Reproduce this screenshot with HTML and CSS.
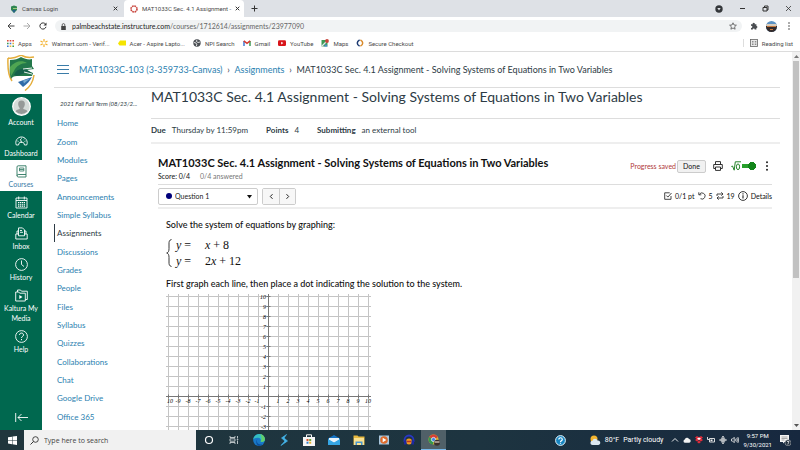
FILE: index.html
```html
<!DOCTYPE html>
<html lang="en">
<head>
<meta charset="utf-8">
<title>MAT1033C Sec. 4.1 Assignment</title>
<link rel="stylesheet" href="styles.css">
</head>
<body>
<header class="browser">
  <div class="tabs">
    <div class="tab">
      <svg class="i8" viewBox="0 0 8 8"><path d="M1 1.500 4 .5l3 1V5L4 8 1 5z" fill="#2f8550"/><path d="M2 5h4L4 8z" fill="#27618a"/><path d="M3 3.500h4" stroke="#9dc87a"/></svg>
      <span class="tab-name">Canvas Login</span>
      <button class="close" aria-label="Close tab"><svg class="i5" viewBox="0 0 5 5"><path d="m.7.7 3.600 3.600m0-3.600L.7 4.300" stroke="#333" fill="none"/></svg></button>
    </div>
    <div class="tab tab-on">
      <svg class="i8" viewBox="0 0 8 8"><circle cx="4" cy="4" r="3" fill="none" stroke="#c8423a" stroke-width="1.600" stroke-dasharray="1.700 .65"/></svg>
      <span class="tab-name">MAT1033C Sec. 4.1 Assignment -</span>
      <button class="close" aria-label="Close tab"><svg class="i5" viewBox="0 0 5 5"><path d="m.7.7 3.600 3.600m0-3.600L.7 4.300" stroke="#333" fill="none"/></svg></button>
    </div>
    <button class="newtab" aria-label="New tab"><svg class="i7" viewBox="0 0 7 7"><path d="M3.500.5v6m-3-3h6" stroke="#333"/></svg></button>
    <div class="window">
      <svg class="i8" viewBox="0 0 8 8"><circle cx="4" cy="4" r="3.700" fill="#33363a"/><path d="M2.300 3h3.400L4 5.500z" fill="#dee1e6"/></svg>
      <button aria-label="Minimize"><svg class="i7" viewBox="0 0 7 7"><path d="M1 3.500h5" stroke="#333"/></svg></button>
      <button aria-label="Restore"><svg class="i7" viewBox="0 0 7 7"><path d="M1 2.500h4V6H1zM2.500 2.500V1H6v4H5" fill="none" stroke="#333"/></svg></button>
      <button aria-label="Close"><svg class="i7" viewBox="0 0 7 7"><path d="m1 1 5 5m0-5L1 6" stroke="#333" stroke-width=".8"/></svg></button>
    </div>
  </div>
  <div class="toolbar">
    <button aria-label="Back"><svg class="i8" viewBox="0 0 8 8"><path d="M7.500 4H1m3-3L1 4l3 3" fill="none" stroke="#444"/></svg></button>
    <button aria-label="Forward"><svg class="i8" viewBox="0 0 8 8"><path d="M.5 4H7M4 1l3 3-3 3" fill="none" stroke="#aaa"/></svg></button>
    <button aria-label="Reload"><svg class="i8" viewBox="0 0 8 8"><path d="M6.600 2.300A3.100 3.100 0 1 0 7 4.800" fill="none" stroke="#333"/><path d="M7.500.5v3h-3z" fill="#333"/></svg></button>
    <div class="address">
      <svg class="i7" viewBox="0 0 7 7"><path d="M1.200 3h4.600v4H1.200z" fill="#444"/><path d="M2.200 3V1.900a1.300 1.300 0 0 1 2.600 0V3" fill="none" stroke="#444" stroke-width=".8"/></svg>
      <a class="url" href="#"><b>palmbeachstate.instructure.com</b>/courses/1712614/assignments/23977090</a>
      <svg class="i8" viewBox="0 0 8 8"><path d="m4 .8 1 2.200 2.400.2-1.800 1.600.5 2.400L4 6 1.900 7.200l.5-2.400L.6 3.200 3 3z" fill="none" stroke="#555" stroke-width=".8"/></svg>
    </div>
    <svg class="i8" viewBox="0 0 8 8"><path d="M1 2.200h1.700a1.100 1.100 0 1 1 2 0h1.700v1.700a1 1 0 1 1 0 2v1.700H4.600a.9.9 0 1 0-1.700 0H1V5.800a1 1 0 1 0 0-1.900z" fill="#4a4d51"/></svg>
    <svg class="i11" viewBox="0 0 11 11"><clipPath id="pc"><circle cx="5.500" cy="5.500" r="5.500"/></clipPath><g clip-path="url(#pc)"><path fill="#5d93c4" d="M0 0h11v11H0z"/><path fill="#d8cdbd" d="M0 3h11v2H0z"/><path fill="#332b2b" d="M0 5h11v6H0z"/><path fill="#c77a40" d="M1 5h9v1H1zm3 3h3v1H4z"/></g></svg>
    <button aria-label="Menu"><svg class="i8" viewBox="0 0 8 8"><g fill="#444"><circle cx="4" cy="1" r=".8"/><circle cx="4" cy="4" r=".8"/><circle cx="4" cy="7" r=".8"/></g></svg></button>
  </div>
  <nav class="bookmarks">
    <a class="bm" href="#"><svg class="i7" viewBox="0 0 7 7"><path fill="#d9483b" d="M0 0h1.600v1.600H0zm2.700 0h1.600v1.600H2.700zm2.700 0H7v1.600H5.400z"/><path fill="#3c9a55" d="M0 2.700h1.600v1.600H0zm5.400 2.700H7V7H5.400z"/><path fill="#3f79d6" d="M2.700 2.700h1.600v1.600H2.700zM0 5.400h1.600V7H0z"/><path fill="#e9b52e" d="M5.400 2.700H7v1.600H5.400zM2.700 5.400h1.600V7H2.700z"/></svg>Apps</a>
    <a class="bm" href="#"><svg class="i8" viewBox="0 0 8 8"><path d="M4 0v2.700M4 5.300V8M.5 2l2.300 1.300m2.400 1.400L7.500 6m-7 0 2.300-1.300m2.400-1.400L7.500 2" stroke="#f3b12c" stroke-width="1.200"/></svg>Walmart.com - Verif...</a>
    <a class="bm" href="#"><svg class="i8" viewBox="0 0 8 8"><path d="M0 4.500 2 1.500h6v5H1.500z" fill="#f5e400"/></svg>Acer - Aspire Lapto...</a>
    <a class="bm" href="#"><svg class="i8" viewBox="0 0 8 8"><circle cx="4" cy="4" r="3.700" fill="#4b4f54"/><path d="M1 3.500 3 4l1 2-1 1M4 1l-.8 1.400L5 3.500 7 3" fill="none" stroke="#fff" stroke-width=".8"/></svg>NPI Search</a>
    <a class="bm" href="#"><svg class="i8" viewBox="0 0 8 8"><path d="M1 7V2" stroke="#3f79d6" stroke-width="1.500"/><path d="M7 7V2" stroke="#3c9a55" stroke-width="1.500"/><path d="m.8 1.800 3.200 2.600 3.200-2.600" fill="none" stroke="#d63a30" stroke-width="1.500"/></svg>Gmail</a>
    <a class="bm" href="#"><svg class="i8" viewBox="0 0 8 8"><rect y="1.200" width="8" height="5.800" rx="1.300" fill="#d8141a"/><path d="m3.200 2.800 2.200 1.300-2.200 1.300z" fill="#fff"/></svg>YouTube</a>
    <a class="bm" href="#"><svg class="i8" viewBox="0 0 8 8"><path fill="#3c9a55" d="M.5 1h6v6.500h-6z"/><path d="M.5 7.500 6 2" stroke="#dfe6ea" stroke-width="1.300"/><path d="M3 7.500 5 5l1.500 2.500z" fill="#4d86dc"/><circle cx="6" cy="2" r="1.900" fill="#c7443b"/></svg>Maps</a>
    <a class="bm" href="#"><svg class="i8" viewBox="0 0 8 8"><path d="M3.600.8C.5 2.500.5 5.500 3.600 7.200" fill="none" stroke="#1e3c73" stroke-width="1.500"/><path d="M4.400.8C7.500 2.500 7.500 5.500 4.400 7.200" fill="none" stroke="#d98a2b" stroke-width="1.500"/></svg>Secure Checkout</a>
    <a class="bm reading" href="#"><svg class="i8" viewBox="0 0 8 8"><rect x=".5" y=".5" width="7" height="7" fill="#e8e8e8" stroke="#666" stroke-width=".8"/><path d="M2 2.500h1.500M2 4h1.500M2 5.500h1.500M4.800 2.500h1.500M4.800 4h1.500M4.800 5.500h1.500" stroke="#666" stroke-width=".7"/></svg>Reading list</a>
  </nav>
</header>

<div class="page">
  <nav class="rail">
    <a class="logo" href="#" aria-label="Palm Beach State"><svg viewBox="0 0 28 36"><path d="M1 3C8 4 10 2 14 0c5 3 8 3 13 2M1 3c-.5 10 .5 18 4 23" fill="none" stroke="#e5ae3c" stroke-width="1.500"/><path d="M3 5c5 0 8-1 11-3 4 2 8 3 11 2v7l2 3-8 1 7 3-1 3H10c-3 0-5 1-6 3C2 18 3 11 3 5z" fill="#23784a"/><path d="M3 12C8 6 15 5 20 8c-6 0-11 3-13 8l-3 5C3 18 3 15 3 12z" fill="#4fa552"/><path d="M7 20c2-5 6-7 12-6l7 5-8-1-8 3z" fill="#15604a"/><path d="m16 14 9-1M17 17l8 2" stroke="#fff" stroke-width=".9"/><path d="m11 27 14-5c-2 4-5 7-9 10z" fill="#2f6ba8"/><path d="m16 25.500 7-2-6 5z" fill="#75a7cf"/><path d="M27 20c-1 7-4 12-9 15.500" fill="none" stroke="#e5ae3c" stroke-width="1.500"/></svg></a>
    <a class="ri account" href="#"><svg class="i19" viewBox="0 0 19 19"><circle cx="9.500" cy="9.500" r="8.800" fill="#d5dbd8" stroke="#fff" stroke-width="1.200"/><path d="M9.500 3.500c2.600 0 3.500 1.800 3.300 4-.2 2-1 3-1.500 3.500v1c2.500.6 3.700 1 4 2.500a8 8 0 0 1-11.600 0c.3-1.500 1.500-1.900 4-2.500v-1C7.200 10.500 6.400 9.500 6.200 7.500c-.2-2.200.7-4 3.300-4z" fill="#969a98"/></svg>Account</a>
    <a class="ri" href="#"><svg class="i13" viewBox="0 0 13 13"><path d="M3.500 11H1.300a5.700 5.700 0 1 1 10.400 0H9.500a3 3 0 0 0-6 0z" fill="none" stroke="#fff" stroke-width=".9"/><path d="M6.500 9 5.500 5M2.500 7l1 .4M6.500 3.700v1M10.500 7l-1 .4M9.500 4.800l-.8.8" stroke="#fff" stroke-width=".9"/></svg>Dashboard</a>
    <a class="ri ri-on" href="#"><svg class="i13" viewBox="0 0 13 13"><path d="M11 9.500H3.200c-1.500 0-1.500 2.500 0 2.500H11M2 10.800V2c0-.8.400-1.200 1.200-1.200H11v8.700M11 9.500V12" fill="none" stroke="#2a765e" stroke-width=".9"/><path d="M4.500 3h4.300v3H4.500zM4.500 4.500h4.300" fill="none" stroke="#2a765e" stroke-width=".8"/></svg>Courses</a>
    <a class="ri" href="#"><svg class="i13" viewBox="0 0 13 13"><path d="M1 2h11v10H1zM1 4.500h11M3.700.5v3M9.300.5v3" fill="none" stroke="#fff" stroke-width=".9"/><path d="M3 6.500h7M3 8.300h7M3 10.100h7" stroke="#fff" stroke-width="1.100" stroke-dasharray="1.300 .6"/></svg>Calendar</a>
    <a class="ri" href="#"><svg class="i13" viewBox="0 0 13 13"><path d="M3.500 7H.8v5h11.400V7H9.500v1.800h-6zM2 7V4h1.500M11 7V4H9.500M3.500 7V.9h4l2 2V7M5 3.500h2M5 5.300h3" fill="none" stroke="#fff" stroke-width=".9"/></svg>Inbox</a>
    <a class="ri" href="#"><svg class="i13" viewBox="0 0 13 13"><circle cx="6.500" cy="6.500" r="5.900" fill="none" stroke="#fff" stroke-width=".9"/><path d="M6.500 2.500v4l2.500 2" fill="none" stroke="#fff" stroke-width=".9"/></svg>History</a>
    <a class="ri" href="#"><svg class="i13" viewBox="0 0 13 13"><path d="M.7 12V3h3l1 1.200h5.600V12zM2.500 3V1h3l1 1.200h5.800V10.500h-2" fill="none" stroke="#fff" stroke-width=".9"/><path d="m4.300 6 3.200 2-3.200 2z" fill="#fff"/></svg>Kaltura My<br>Media</a>
    <a class="ri" href="#"><svg class="i13" viewBox="0 0 13 13"><circle cx="6.500" cy="6.500" r="5.900" fill="none" stroke="#fff" stroke-width=".9"/><path d="M4.500 5c0-2.600 4-2.600 4 0 0 1.500-2 1.500-2 3M6.500 9v1.200" fill="none" stroke="#fff"/></svg>Help</a>
    <button class="collapse" aria-label="Minimize navigation"><svg class="i13" viewBox="0 0 13 13"><path d="M.7 2v9M13 6.500H3M6.500 3 3 6.500 6.500 10" fill="none" stroke="#fff" stroke-width=".9"/></svg></button>
  </nav>

  <div class="content">
    <div class="crumbs">
      <button class="burger" aria-label="Course menu"><svg class="i12" viewBox="0 0 12 12"><path d="M0 2.500h12M0 6.500h12M0 10.500h12" stroke="#3a7ca8"/></svg></button>
      <a href="#">MAT1033C-103 (3-359733-Canvas)</a><i class="sep">›</i><a href="#">Assignments</a><i class="sep">›</i><span>MAT1033C Sec. 4.1 Assignment - Solving Systems of Equations in Two Variables</span>
    </div>
    <div class="columns">
      <aside class="side">
        <p class="term">2021 Fall Full Term (08/23/2...</p>
        <nav class="menu">
          <a href="#">Home</a><a href="#">Zoom</a><a href="#">Modules</a><a href="#">Pages</a><a href="#">Announcements</a><a href="#">Simple Syllabus</a><a class="here" href="#">Assignments</a><a href="#">Discussions</a><a href="#">Grades</a><a href="#">People</a><a href="#">Files</a><a href="#">Syllabus</a><a href="#">Quizzes</a><a href="#">Collaborations</a><a href="#">Chat</a><a href="#">Google Drive</a><a href="#">Office 365</a>
        </nav>
      </aside>
      <main class="main">
        <h1>MAT1033C Sec. 4.1 Assignment - Solving Systems of Equations in Two Variables</h1>
        <div class="facts">
          <span><b>Due</b>Thursday by 11:59pm</span><span><b>Points</b>4</span><span><b>Submitting</b>an external tool</span>
        </div>
        <section class="quiz">
          <div class="quiz-head">
            <div>
              <h2>MAT1033C Sec. 4.1 Assignment - Solving Systems of Equations in Two Variables</h2>
              <p class="score"><span>Score: 0/4</span><span class="muted">0/4 answered</span></p>
            </div>
            <div class="actions">
              <span class="saved">Progress saved</span>
              <button class="done">Done</button>
              <button class="print" aria-label="Print"><svg class="i10" viewBox="0 0 10 10"><path d="M2.500 3.500V.6h5v2.900M2.500 7.500H.7v-4h8.600v4H7.500M2.500 6h5v3.400h-5z" fill="none" stroke="#333"/></svg></button>
              <label class="math"><svg class="i10" viewBox="0 0 10 10"><path d="M.3 5.500 1.500 5l1.700 4.200L4.300.8H10" fill="none" stroke="#27852b"/><ellipse cx="7" cy="5.800" rx="1.600" ry="2.900" fill="none" stroke="#27852b"/></svg><input type="checkbox" checked aria-label="Math editor"></label>
              <button class="more" aria-label="More"><svg class="i10" viewBox="0 0 10 10"><g fill="#222"><circle cx="5" cy="1.200" r="1"/><circle cx="5" cy="5" r="1"/><circle cx="5" cy="8.800" r="1"/></g></svg></button>
            </div>
          </div>
          <div class="quiz-nav">
            <label class="pick"><span class="dot"></span><select aria-label="Question"><option>Question 1</option></select><svg class="i5" viewBox="0 0 5 5"><path d="M0 1h5L2.500 4.500z" fill="#111"/></svg></label>
            <div class="pair"><button aria-label="Previous"><svg class="i7" viewBox="0 0 7 7"><path d="m4.500 1.200-2.200 2.300 2.200 2.300" fill="none" stroke="#222"/></svg></button><button aria-label="Next"><svg class="i7" viewBox="0 0 7 7"><path d="m2.500 1.200 2.200 2.300-2.200 2.300" fill="none" stroke="#222"/></svg></button></div>
            <div class="stats">
              <svg class="i8" viewBox="0 0 8 8"><path d="M7 4v3.300H.7V.8h5" fill="none" stroke="#333" stroke-width=".9"/><path d="m2.300 3.500 1.600 1.600L7.500 1" fill="none" stroke="#333" stroke-width=".9"/></svg>0/1 pt
              <svg class="i8" viewBox="0 0 8 8"><path d="M1.300 2.500a3.100 3.100 0 1 1 1.200 4.200M.8.300v2.500h2.500" fill="none" stroke="#333" stroke-width=".9"/></svg>5
              <svg class="i8" viewBox="0 0 8 8"><path d="M1 4V2h6M5.300.3 7 2 5.300 3.700M7 4v2H1m1.700-1.700L1 6l1.700 1.700" fill="none" stroke="#333" stroke-width=".9"/></svg>19
              <svg class="i10" viewBox="0 0 10 10"><circle cx="5" cy="5" r="4.400" fill="none" stroke="#222" stroke-width=".9"/><path d="M5 4.300v3.200M5 2.200v1.200" stroke="#222" stroke-width="1.100"/></svg><a href="#">Details</a>
            </div>
          </div>
          <div class="question">
            <p>Solve the system of equations by graphing:</p>
            <div class="system">
              <svg class="brace" viewBox="0 0 6 28"><path d="M5.500.5C3 1 3 3 3 5v4.500C3 12 2.500 13.500.7 14 2.500 14.500 3 16 3 18.500V23c0 2 0 4 2.500 4.500" fill="none" stroke="#222" stroke-width=".9"/></svg>
              <div class="eqs"><span><i>y</i> =</span><span><i>x</i> + 8</span><span><i>y</i> =</span><span>2<i>x</i> + 12</span></div>
            </div>
            <p>First graph each line, then place a dot indicating the solution to the system.</p>
            <svg class="graph" viewBox="0 0 206 206">
              <defs><pattern id="g" x="2" y="2" width="10" height="10" patternUnits="userSpaceOnUse"><path d="M.5 0v10M0 .5h10" stroke="#c4c4c4"/></pattern></defs>
              <rect width="205" height="205" fill="url(#g)"/>
              <path d="M102.500 0v205M0 102.500h205" stroke="#777"/>
              <path d="M0 102.500h205" stroke="#777" stroke-width="4" stroke-dasharray="1 9" stroke-dashoffset="-2"/>
              <path d="M102.500 0v205" stroke="#777" stroke-width="4" stroke-dasharray="1 9" stroke-dashoffset="-2"/>
              <g text-anchor="middle">
                <text x="4" y="109">10</text><text x="12" y="109">-9</text><text x="22" y="109">-8</text><text x="32" y="109">-7</text><text x="42" y="109">-6</text><text x="52" y="109">-5</text><text x="62" y="109">-4</text><text x="72" y="109">-3</text><text x="82" y="109">-2</text><text x="91" y="109">-1</text>
                <text x="112" y="109">1</text><text x="122" y="109">2</text><text x="132" y="109">3</text><text x="142" y="109">4</text><text x="152" y="109">5</text><text x="162" y="109">6</text><text x="172" y="109">7</text><text x="182" y="109">8</text><text x="192" y="109">9</text><text x="202" y="109">10</text>
              </g>
              <g text-anchor="end">
                <text x="100" y="5">10</text><text x="100" y="15">9</text><text x="100" y="25">8</text><text x="100" y="35">7</text><text x="100" y="45">6</text><text x="100" y="55">5</text><text x="100" y="65">4</text><text x="100" y="75">3</text><text x="100" y="85">2</text><text x="100" y="95">1</text><text x="100" y="115">-1</text><text x="100" y="125">-2</text><text x="100" y="135">-3</text>
              </g>
            </svg>
          </div>
        </section>
      </main>
    </div>
  </div>
  <div class="scroll"><svg class="i5" viewBox="0 0 5 5"><path d="M0 4h5L2.500 1z" fill="#777"/></svg><span class="thumb"></span><svg class="i5" viewBox="0 0 5 5"><path d="M0 1h5L2.500 4z" fill="#555"/></svg></div>
</div>

<footer class="taskbar">
  <button class="start" aria-label="Start"><svg class="i9" viewBox="0 0 9 9"><path d="M0 1.300 4 .7v3.500H0zM4.500.6 9 0v4.200H4.500zM0 4.700h4v3.500l-4-.6zM4.500 4.700H9V9l-4.500-.7z" fill="#fff"/></svg></button>
  <label class="search"><svg class="i9" viewBox="0 0 9 9"><circle cx="5.500" cy="3.500" r="2.800" fill="none" stroke="#333" stroke-width=".9"/><path d="M3.500 5.500.5 8.500" stroke="#333"/></svg><input type="text" placeholder="Type here to search" aria-label="Search"></label>
  <div class="apps">
    <button aria-label="Cortana"><svg class="i10" viewBox="0 0 10 10"><circle cx="5" cy="5" r="3.500" fill="none" stroke="#fff" stroke-width="1.200"/></svg></button>
    <button aria-label="Task view"><svg class="i10" viewBox="0 0 10 10"><path d="M1 1v1.500h5V1M1 9V7.500h5V9M1 3.800h5v2.400H1zM8.500 1v2.500M8.500 5.500V9M7.800 4.500h1.500" fill="none" stroke="#dfe4e6" stroke-width=".8"/></svg></button>
    <button aria-label="Edge"><svg class="i12" viewBox="0 0 12 12"><circle cx="6" cy="6" r="5.900" fill="#1878c8"/><path d="M.2 5.500C1 1.500 4 0 6.500.1 10 .2 12 3 11.900 5.500c0 2-2 2.500-4.300 2.200.8-2-.2-3.800-2.600-3.900C3 3.700 1 4.300.2 5.500z" fill="#35bfc0"/><path d="M7 .1c3 .3 5 3 4.900 5.400 0 1.800-2 2.500-4.300 2.200C9 5 9 2.500 7 .1z" fill="#63cf6a"/><path d="M4.500 5c-2 3 1 6.500 5 5.200A6 6 0 0 1 6 12C3 11 2.500 7 4.500 5z" fill="#0b4f9d"/></svg></button>
    <button aria-label="Swift"><svg class="i12" viewBox="0 0 12 12"><path d="M8.500.5 3.500 4 7 7 3 11.500 9.500 7 6 4z" fill="#45b4ea" stroke="#45b4ea" stroke-width=".7"/></svg></button>
    <button aria-label="Store"><svg class="i12" viewBox="0 0 12 12"><path d="M0 3h12v9H0z" fill="#f5f5f5"/><path d="M3.500 3V.8h5V3" fill="none" stroke="#f5f5f5"/><path d="M3.500 5h2v2h-2z" fill="#d9532c"/><path d="M6.200 5h2v2h-2z" fill="#6ba539"/><path d="M3.500 7.700h2v2h-2z" fill="#3380c9"/><path d="M6.200 7.700h2v2h-2z" fill="#e5b12f"/></svg></button>
    <button aria-label="Mail"><svg class="i12" viewBox="0 0 12 12"><path d="M0 4.500 6 1l6 3.500V11H0z" fill="#1573c4"/><path d="M1 4h10v2L6 9 1 6z" fill="#e9f4fb"/><path d="m0 5 6 3.500L12 5v6H0z" fill="#35a6e4"/></svg></button>
    <button aria-label="Files"><svg class="i12" viewBox="0 0 12 12"><path d="M.5 1.500h4l1 1h6V11H.5z" fill="#e7b93f"/><path d="M1 4h10v7H1z" fill="#fae190"/><path d="M2.500 11V7.500h7V11H8V9H4v2z" fill="#4a98cf"/></svg></button>
    <button aria-label="Media player"><svg class="i12" viewBox="0 0 12 12"><path d="M1 1.500h10v9H1z" fill="#a9c6dd"/><circle cx="6" cy="6" r="3.800" fill="#dd6b2b"/><path d="m4.700 3.800 3.700 2.200-3.700 2.200z" fill="#fff"/></svg></button>
    <button aria-label="Audacity"><svg class="i12" viewBox="0 0 12 12"><path d="M1.500 8V6a4.500 4.500 0 0 1 9 0v2" fill="none" stroke="#2836c4" stroke-width="1.800"/><circle cx="6" cy="7.500" r="3" fill="#ef9a24"/><path d="M1 6.500h2.500v4H1zm7.500 0H11v4H8.500z" fill="#1e28a0"/><path d="M4 7.500h4" stroke="#bd3322" stroke-width="1.500"/></svg></button>
    <button class="running" aria-label="Chrome"><svg class="i12" viewBox="0 0 12 12"><circle cx="5.500" cy="5.500" r="5" fill="#e2b52d"/><path d="M1.200 3A5 5 0 0 1 9.800 3L6 6z" fill="#d83f35"/><path d="M1.200 3A5 5 0 0 0 5 10.500L6 6z" fill="#34984f"/><circle cx="5.500" cy="5.500" r="2.100" fill="#4686e0" stroke="#fff" stroke-width=".7"/><circle cx="9" cy="8.800" r="3" fill="#3b2f2c"/><path d="M6.500 8h5" stroke="#e3d3c3" stroke-width="1.200"/></svg></button>
  </div>
  <div class="tray">
    <svg class="i11 helpi" viewBox="0 0 11 11"><circle cx="5.500" cy="5.500" r="4.900" fill="#1685c0" stroke="#e2f1f8"/><path d="M3.800 4.500c0-2.400 3.500-2.200 3.500 0 0 1.200-1.800 1.300-1.800 2.500M5.500 7.700v1" fill="none" stroke="#fff" stroke-width="1.200"/></svg>
    <svg class="i11" viewBox="0 0 11 11"><circle cx="4" cy="4" r="3.500" fill="#f3b52f"/><path d="M2.500 10a2.100 2.100 0 0 1 0-4.200 2.600 2.600 0 0 1 5-.3A2.300 2.300 0 0 1 8.500 10z" fill="#dbe7f0"/></svg>
    <span class="weather"><span>80°F</span><span>Partly cloudy</span></span>
    <svg class="i8" viewBox="0 0 8 8"><path d="m1 5.500 3-3 3 3" fill="none" stroke="#fff" stroke-width=".9"/></svg>
    <svg class="i8" viewBox="0 0 8 8"><path d="M1.800 6.800a1.700 1.700 0 0 1 0-3.300 2.300 2.300 0 0 1 4.200-.6A2 2 0 0 1 6.300 6.800z" fill="#f2f2f2"/></svg>
    <svg class="i8" viewBox="0 0 8 8"><path d="m2 0 2 1.300L6 0l2 1.500-1.500 1.300L8 4 6 5.500 4 4 2 5.500 0 4l1.500-1.200L0 1.500z" fill="#e32c3b"/><path d="m2 6 2-1.300L6 6 4 7.500z" fill="#e32c3b"/><path d="M4 1.500 6 2.800 4 4 2 2.800z" fill="#fff"/></svg>
    <svg class="i8" viewBox="0 0 8 8"><path d="M2.500 2.500h5v3.500h-5zM.5 1v2.500h1.500" fill="none" stroke="#eee" stroke-width=".9"/><path d="M3.500 3.500h2v1.600h-2z" fill="#eee"/></svg>
    <svg class="i8" viewBox="0 0 8 8"><path d="M4 0v8M0 4h8M2.500 1.700 4 .4l1.500 1.300M2.500 6.300 4 7.600l1.500-1.300M2 2.800h4v2.400H2z" fill="none" stroke="#eee" stroke-width=".8"/></svg>
    <svg class="i8" viewBox="0 0 8 8"><path d="M.5 3h1L3.200 1.300v5.400L1.500 5h-1zM4.500 2.800q.8 1.200 0 2.400M5.700 1.900q1.400 2.100 0 4.200M6.800 1q2 3 0 6" fill="none" stroke="#eee" stroke-width=".8"/></svg>
    <span class="clock"><time>9:57 PM</time><time>9/30/2021</time></span>
    <button class="note" aria-label="Notifications"><svg class="i11" viewBox="0 0 11 11"><path d="M0 0h9v7H4.500L3 8.500V7H0z" fill="#f4f4f4"/><path d="M1.500 2h6M1.500 3.500h6M1.500 5h3" stroke="#777" stroke-width=".6"/><circle cx="8" cy="7.800" r="3" fill="#23303f" stroke="#ccc" stroke-width=".5"/><path d="M7 6.500h2L7.800 9.500" fill="none" stroke="#fff" stroke-width=".7"/></svg></button>
  </div>
</footer>
</body>
</html>
```
FILE: styles.css
```css
* { box-sizing: border-box; }
html, body { height: 100%; }
body {
  margin: 0;
  display: flex;
  flex-direction: column;
  overflow: hidden;
  background: #fff;
  color: #2d3b45;
  font-family: Lato, sans-serif;
  font-size: 9px;
}
svg { display: block; flex: none; }
a { color: inherit; text-decoration: none; }
p, h1, h2 { margin: 0; }
button {
  display: flex;
  align-items: center;
  justify-content: center;
  margin: 0;
  padding: 0;
  border: 0;
  background: none;
  color: inherit;
  font: inherit;
}
.i5 { width: 5px; height: 5px; }
.i7 { width: 7px; height: 7px; }
.i8 { width: 8px; height: 8px; }
.i9 { width: 9px; height: 9px; }
.i10 { width: 10px; height: 10px; }
.i11 { width: 11px; height: 11px; }
.i12 { width: 12px; height: 12px; }
.i13 { width: 13px; height: 13px; }
.i19 { width: 19px; height: 19px; }

/* Browser frame */
.browser {
  flex: none;
  border-bottom: 1px solid #dcdcdc;
  color: #4a4a4a;
  font-family: Roboto, sans-serif;
  font-size: 6px;
}
.tabs { display: flex; height: 17px; background: #dee1e6; }
.tab { display: flex; align-items: center; width: 124px; padding: 0 6px 0 10px; gap: 4px; }
.tab-on { width: 120px; padding-left: 6px; background: #fff; border-radius: 4px 4px 0 0; }
.tab-name { flex: 1; white-space: nowrap; }
.newtab { width: 21px; }
.window { display: flex; align-items: center; gap: 16px; margin-left: auto; padding-right: 8px; }
.toolbar { display: flex; align-items: center; gap: 8px; height: 18px; padding: 0 7px; }
.address {
  flex: 1;
  display: flex;
  align-items: center;
  gap: 5px;
  height: 12px;
  padding: 0 5px;
  border-radius: 6px;
  background: #f1f3f4;
  font-family: Lato, sans-serif;
  font-size: 7px;
}
.url { flex: 1; color: #666; }
.url b { color: #222; font-weight: 400; }
.bookmarks { display: flex; align-items: center; gap: 8px; height: 16px; padding: 0 7px; }
.bm { display: flex; align-items: center; gap: 4px; white-space: nowrap; }
.reading { margin-left: auto; padding-left: 6px; border-left: 1px solid #ddd; }

/* Page shell */
.page { flex: 1; display: flex; min-height: 0; overflow: hidden; }
.rail {
  flex: none;
  display: flex;
  flex-direction: column;
  width: 42px;
  background: #00684f;
  color: #fff;
  font-size: 7px;
  line-height: 10px;
  text-align: center;
}
.logo { display: flex; justify-content: center; height: 42px; padding-top: 3px; background: #fff; }
.logo svg { width: 28px; height: 36px; }
.ri { display: flex; flex-direction: column; align-items: center; gap: 1px; padding: 5px 0 2px; white-space: nowrap; }
.account { padding-top: 3px; }
.ri-on { background: #fff; color: #3a7ca8; }
.collapse { margin: auto auto 6px; }
.content { flex: 1; min-width: 0; padding: 0 12px; }
.crumbs {
  display: flex;
  align-items: center;
  height: 36px;
  padding: 0 0 1px 3px;
  border-bottom: 1px solid #ddd;
  white-space: nowrap;
}
.burger { margin-right: 10px; }
.crumbs a, .menu a { color: #2b7fb0; }
.sep { width: 12px; font-style: normal; text-align: center; }
.columns { display: flex; }
.side { width: 97px; padding-left: 3px; }
.term { padding: 10px 3px 5px; font-size: 6px; font-style: italic; line-height: 11px; white-space: nowrap; }
.menu { display: grid; grid-auto-rows: 1fr; height: 312px; font-size: 8px; }
.menu a { display: flex; align-items: center; }
.menu .here { margin-left: -3px; padding-left: 2px; border-left: 1px solid #2d3b45; color: #2d3b45; }

/* Assignment */
.main { flex: 1; min-width: 0; }
h1 { height: 31px; border-bottom: 1px solid #ddd; font-size: 14px; font-weight: 400; line-height: 18px; white-space: nowrap; }
.facts { display: flex; gap: 18px; height: 25px; border-bottom: 2px solid #eee; font-size: 8px; line-height: 23px; }
.facts b { margin-right: 6px; }
.quiz { padding: 11px 8px 0 7px; color: #111; }
.quiz-head { display: flex; justify-content: space-between; height: 30px; border-bottom: 1px solid #ddd; white-space: nowrap; }
h2 { font-size: 11px; font-weight: 700; line-height: 16px; }
.score { display: flex; gap: 10px; font-size: 7px; line-height: 10px; }
.muted { color: #777; }
.actions { display: flex; align-items: center; height: 22px; font-size: 7px; }
.saved { color: #b13a3a; }
.done { width: 29px; height: 13px; margin-left: 1px; border: 1px solid #ccc; border-radius: 2px; background: #f1f1f1; }
.print { margin-left: 7px; }
.math { display: flex; align-items: center; margin-left: 8px; }
.math input {
  width: 14px;
  height: 8px;
  margin: 0 0 0 1px;
  appearance: none;
  background: radial-gradient(circle at 10px 4px, #12851a 4px, transparent 4px), linear-gradient(#27a02c, #27a02c) 0 50% / 11px 4px no-repeat;
}
.more { margin-left: 6px; }
.quiz-nav { display: flex; align-items: center; height: 24px; border-bottom: 2px solid #eee; font-size: 7px; }
.pick { display: flex; align-items: center; width: 100px; height: 17px; padding: 0 5px 0 7px; border: 1px solid #ccc; border-radius: 2px; }
.dot { width: 6px; height: 6px; border-radius: 50%; background: #00007a; }
.pick select { flex: 1; min-width: 0; padding: 0 3px; border: 0; appearance: none; background: none; color: #222; font: inherit; }
.pair { display: flex; height: 17px; margin-left: 4px; border: 1px solid #ccc; border-radius: 2px; }
.pair button { width: 16px; background: #f7f7f7; }
.pair button + button { border-left: 1px solid #ccc; }
.stats { display: flex; align-items: center; gap: 3px; margin-left: auto; }
.question { padding: 7px 8px 0; font-size: 9px; font-weight: 500; line-height: 18px; white-space: nowrap; }
.system { display: flex; align-items: center; height: 37px; margin-bottom: 4px; font: 12px/16px "Liberation Serif", serif; }
.brace { width: 6px; height: 28px; margin-right: 4px; }
.eqs { display: grid; grid-template-columns: 29px auto; }
.graph { width: 206px; height: 206px; margin-top: 1px; font: italic 6px "Liberation Serif", serif; }

.scroll { flex: none; display: flex; flex-direction: column; align-items: center; width: 8px; padding: 2px 0; background: #f1f1f1; }
.thumb { width: 6px; height: 58%; margin: 2px 0 auto; background: #c1c1c1; }

/* Taskbar */
.taskbar {
  flex: none;
  display: flex;
  height: 20px;
  background: linear-gradient(to right, #20363d, #1d3440 60%, #17283f);
  color: #fff;
  font-family: Roboto, sans-serif;
  font-size: 7px;
}
.start { width: 24px; }
.search { display: flex; align-items: center; gap: 5px; width: 172px; padding-left: 6px; background: #f1f1f1; font-family: "Open Sans", sans-serif; }
.search input { flex: 1; min-width: 0; padding: 0; border: 0; background: none; font: inherit; }
.search input::placeholder { color: #444; opacity: 1; }
.apps { display: flex; }
.apps button { width: 25px; }
.apps .running { background: #506068; border-bottom: 1px solid #76b9ed; }
.tray { display: flex; align-items: center; gap: 4px; margin-left: auto; padding-right: 9px; }
.helpi { margin-right: 20px; }
.weather { display: flex; gap: 4px; margin-right: 4px; white-space: nowrap; }
.clock { display: flex; flex-direction: column; align-items: center; font-size: 6px; line-height: 9px; }
.note { margin-left: 4px; }
```
